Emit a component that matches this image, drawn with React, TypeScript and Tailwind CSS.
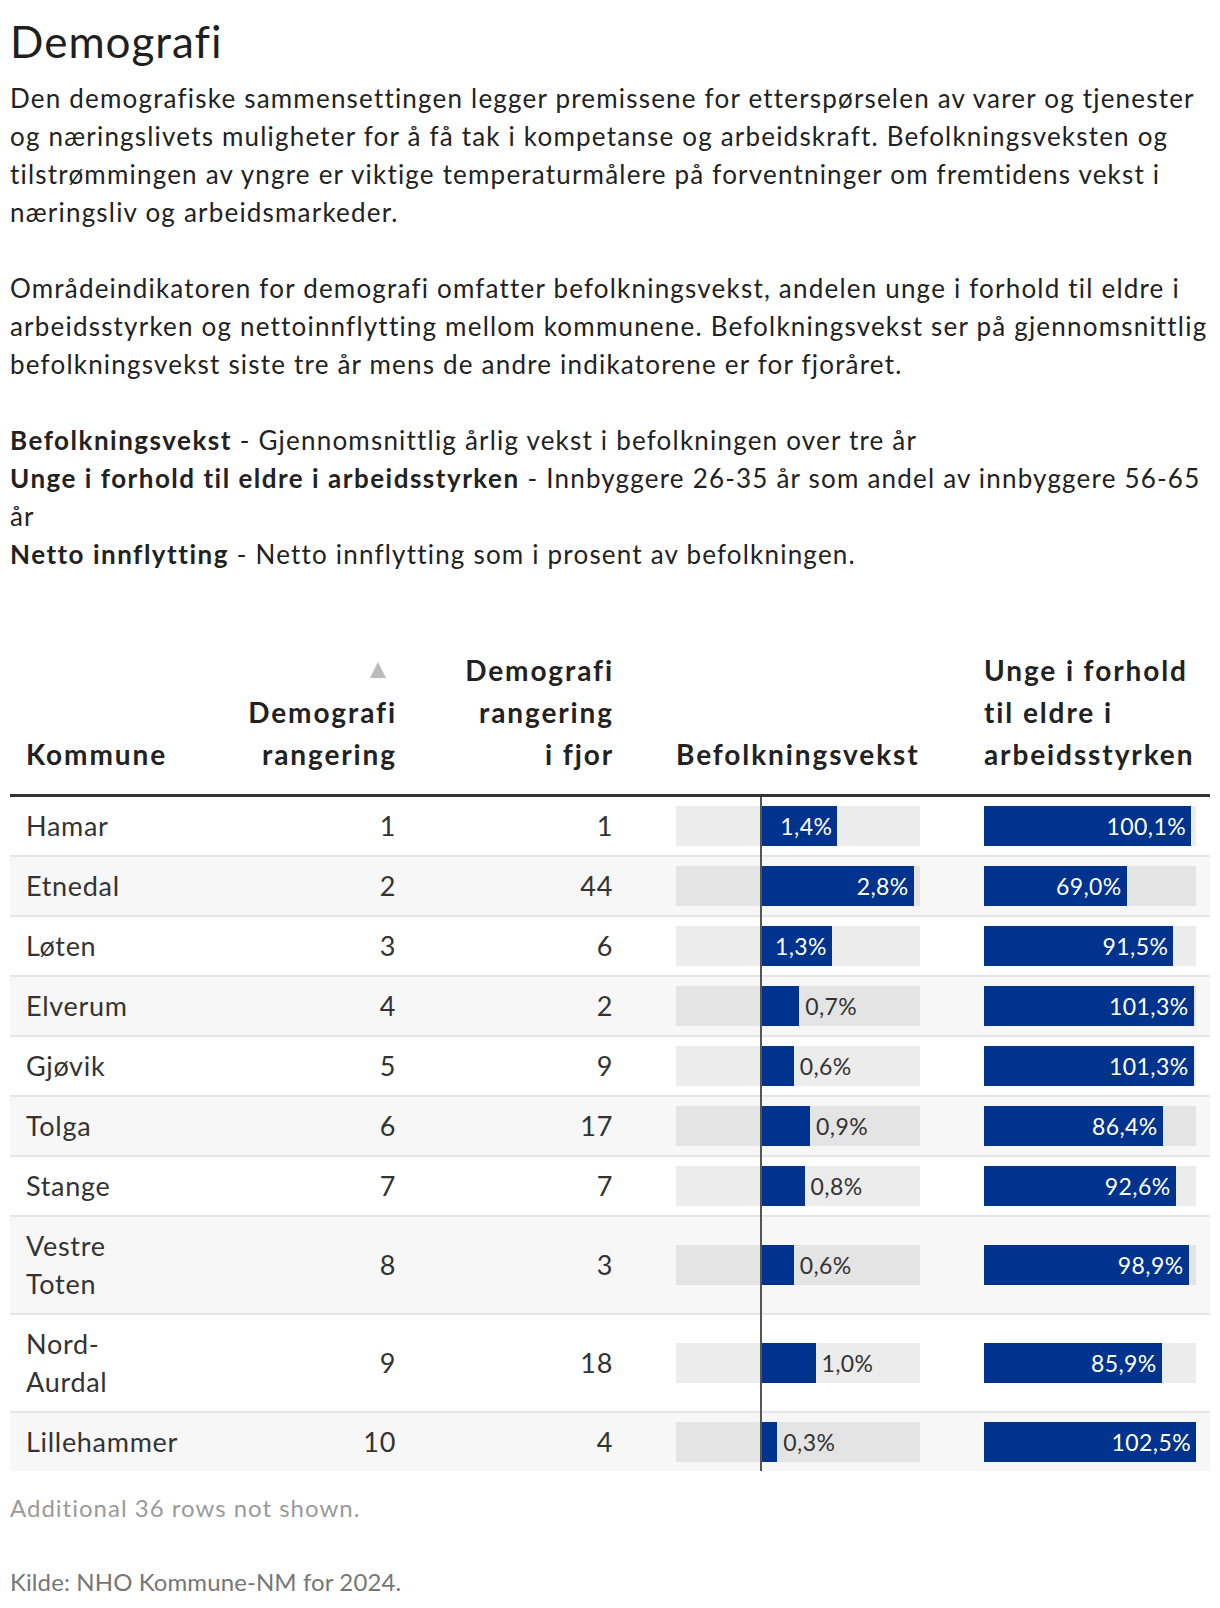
const rows = [
  { name: ['Hamar'], rank: 1, prev: 1, growth: 1.4, young: 100.1 },
  { name: ['Etnedal'], rank: 2, prev: 44, growth: 2.8, young: 69.0 },
  { name: ['Løten'], rank: 3, prev: 6, growth: 1.3, young: 91.5 },
  { name: ['Elverum'], rank: 4, prev: 2, growth: 0.7, young: 101.3 },
  { name: ['Gjøvik'], rank: 5, prev: 9, growth: 0.6, young: 101.3 },
  { name: ['Tolga'], rank: 6, prev: 17, growth: 0.9, young: 86.4 },
  { name: ['Stange'], rank: 7, prev: 7, growth: 0.8, young: 92.6 },
  { name: ['Vestre', 'Toten'], rank: 8, prev: 3, growth: 0.6, young: 98.9 },
  { name: ['Nord-', 'Aurdal'], rank: 9, prev: 18, growth: 1.0, young: 85.9 },
  { name: ['Lillehammer'], rank: 10, prev: 4, growth: 0.3, young: 102.5 },
];

const ZERO = 85; // px from left edge of the 244px track
const PER_PCT = 54.5;
const YOUNG_MAX = 102.5;
const YOUNG_TRACK = 212;

const fmt = (v: number) => v.toFixed(1).replace('.', ',') + '%';

function GrowthBar({ value }: { value: number }) {
  const w = value * PER_PCT;
  const inside = w > 62;
  return (
    <div className="relative h-[40px] w-[244px] bg-black/[0.075] text-[23px] leading-[40px] tracking-[0.4px]">
      <div className="absolute top-0 bottom-0 bg-[#00338d]" style={{ left: ZERO, width: w }} />
      {inside ? (
        <span className="absolute top-0 bottom-0 pr-[5px] text-right text-white" style={{ left: ZERO, width: w }}>
          {fmt(value)}
        </span>
      ) : (
        <span className="absolute top-0 bottom-0 text-[#333]" style={{ left: ZERO + w + 6 }}>
          {fmt(value)}
        </span>
      )}
    </div>
  );
}

function YoungBar({ value }: { value: number }) {
  const w = (value / YOUNG_MAX) * YOUNG_TRACK;
  return (
    <div className="flex h-[40px] w-[212px] bg-black/[0.075]">
      <div
        className="h-full whitespace-nowrap bg-[#00338d] pr-[5px] text-right text-[23px] leading-[40px] tracking-[0.4px] text-white"
        style={{ width: w }}
      >
        {fmt(value)}
      </div>
    </div>
  );
}

const cols = 'grid grid-cols-[217px_184px_217px_308px_274px]';
const strong = 'font-bold tracking-[1.5px]';

export default function App() {
  return (
    <div className="min-h-screen bg-white px-[10px] pt-[16px] pb-[10px] font-['Lato','Liberation_Sans',sans-serif] text-[#222] [font-variant-ligatures:none]">
      <h1 className="text-[44px] leading-[50px] tracking-[1px] text-[#1f1f1f]">Demografi</h1>

      <div className="mt-[13px] whitespace-nowrap text-[26px] leading-[38px] tracking-[1.2px]">
        <p>
          Den demografiske sammensettingen legger premissene for etterspørselen av varer og tjenester
          <br />
          og næringslivets muligheter for å få tak i kompetanse og arbeidskraft. Befolkningsveksten og
          <br />
          tilstrømmingen av yngre er viktige temperaturmålere på forventninger om fremtidens vekst i
          <br />
          næringsliv og arbeidsmarkeder.
        </p>
        <p className="mt-[38px]">
          Områdeindikatoren for demografi omfatter befolkningsvekst, andelen unge i forhold til eldre i
          <br />
          arbeidsstyrken og nettoinnflytting mellom kommunene. Befolkningsvekst ser på gjennomsnittlig
          <br />
          befolkningsvekst siste tre år mens de andre indikatorene er for fjoråret.
        </p>
        <div className="mt-[38px]">
          <p>
            <b className={strong}>Befolkningsvekst</b> - Gjennomsnittlig årlig vekst i befolkningen over tre år
          </p>
          <p>
            <b className={strong}>Unge i forhold til eldre i arbeidsstyrken</b> - Innbyggere 26-35 år som andel av
            innbyggere 56-65
            <br />
            år
          </p>
          <p>
            <b className={strong}>Netto innflytting</b> - Netto innflytting som i prosent av befolkningen.
          </p>
        </div>
      </div>

      <div className="mt-[76px]">
        <div
          className={`${cols} items-end border-b-[3px] border-[#333] pb-[19px] text-[28px] font-bold leading-[42px] tracking-[1.9px] text-[#222]`}
        >
          <div className="pl-[16px]">Kommune</div>
          <div className="pr-[14px] text-right">
            <div className="flex h-[42px] items-center justify-end pr-[11px]">
              <svg width="16" height="16" viewBox="0 0 16 16">
                <polygon points="8,0 16,16 0,16" fill="#bbbbbb" />
              </svg>
            </div>
            Demografi
            <br />
            rangering
          </div>
          <div className="pr-[14px] text-right">
            Demografi
            <br />
            rangering
            <br />i fjor
          </div>
          <div className="pl-[48px] pr-[12px] whitespace-nowrap">Befolkningsvekst</div>
          <div className="pl-[48px] pr-[10px] whitespace-nowrap">
            Unge i forhold
            <br />
            til eldre i
            <br />
            arbeidsstyrken
          </div>
        </div>

        <div className="relative">
          {rows.map((r, i) => (
            <div
              key={r.name.join('')}
              className={`${cols} items-center text-[27px] leading-[38px] tracking-[0.7px] text-[#333] ${
                i % 2 === 1 ? 'bg-[#f7f7f7]' : 'bg-white'
              } ${i < rows.length - 1 ? 'border-b-2 border-[#e6e6e6]' : ''}`}
            >
              <div className="py-[10px] pl-[16px]">
                {r.name.map((n) => (
                  <div key={n}>{n}</div>
                ))}
              </div>
              <div className="py-[10px] pr-[15px] text-right">{r.rank}</div>
              <div className="py-[10px] pr-[15px] text-right">{r.prev}</div>
              <div className="py-[9px] pl-[48px] pr-[16px]">
                <GrowthBar value={r.growth} />
              </div>
              <div className="py-[9px] pl-[48px] pr-[14px]">
                <YoungBar value={r.young} />
              </div>
            </div>
          ))}
          <div className="absolute top-0 bottom-0 left-[750px] z-10 w-[2px] bg-[#555]" />
        </div>
      </div>

      <p className="mt-[18px] text-[24px] leading-[38px] tracking-[1px] text-[#9a9a9a]">Additional 36 rows not shown.</p>
      <p className="mt-[36px] text-[24px] leading-[38px] tracking-[0.1px] text-[#777]">Kilde: NHO Kommune-NM for 2024.</p>
    </div>
  );
}
